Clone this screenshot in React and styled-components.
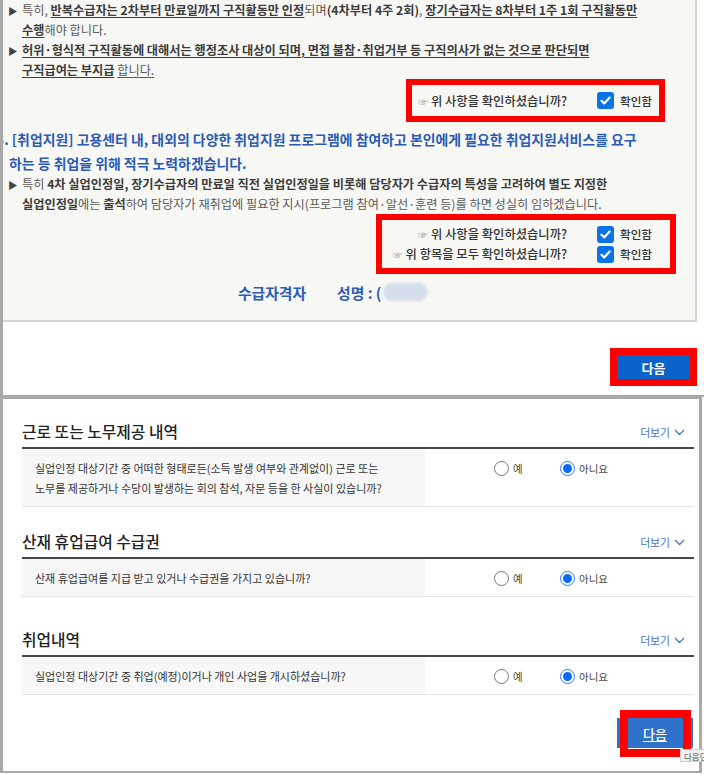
import React from "react";
import styled, { createGlobalStyle } from "styled-components";

const GlobalStyle = createGlobalStyle`
  html, body { margin: 0; padding: 0; background: #fff; }
  body {
    width: 704px;
    height: 774px;
    overflow: hidden;
    font-family: "Noto Sans CJK KR", "Noto Sans", sans-serif;
  }
  * { box-sizing: border-box; }
`;

const Page = styled.div`
  width: 704px;
`;

/* ---------- top panel ---------- */
const TopPanel = styled.section`
  border-left: 3px solid #a9a9a9;
  border-bottom: 2px solid #a9a9a9;
  overflow: hidden;
`;

const Notice = styled.div`
  display: flex;
  flex-direction: column;
  margin-right: 7px;
  padding: 1px 0 16px 5px;
  background: #f7f7f4;
  border-right: 2px solid #d3d3d3;
  border-bottom: 2px solid #d3d3d3;
`;

const Bullet = styled.p`
  margin: 0;
  padding-left: 14px;
  text-indent: -14px;
  font-size: 12.2px;
  line-height: 19.4px;
  color: #5a5a5a;
  white-space: nowrap;
`;

const Arrow = styled.span`
  display: inline-block;
  width: 14px;
  text-indent: 0;
  font-size: 9.5px;
  color: #444;
`;

const Strong = styled.b`
  font-weight: 700;
  color: #3c3c3c;
  text-decoration: ${(p) => (p.$u ? "underline" : "none")};
  text-underline-offset: 2px;
`;

const Under = styled.span`
  text-decoration: underline;
  text-underline-offset: 2px;
`;

const Highlight = styled.div`
  align-self: flex-end;
  display: flex;
  flex-direction: column;
  align-items: flex-end;
  margin-top: ${(p) => p.$mt}px;
  margin-right: ${(p) => p.$mr}px;
  padding: ${(p) => p.$pad};
  border: 6px solid #ff0000;
`;

const ConfirmRow = styled.div`
  display: flex;
  align-items: center;
  height: 20px;
`;

const Question = styled.span`
  font-size: 12.3px;
  font-weight: 500;
  color: #333;
  white-space: nowrap;
`;

const Hand = styled.span`
  font-size: 10px;
  color: #9a9a9a;
  margin-right: 3px;
`;

const CheckLabel = styled.label`
  display: flex;
  align-items: center;
  gap: 6px;
  margin-left: 30px;
  font-size: 11.6px;
  font-weight: 500;
  color: #333;
`;

const CheckBox = styled.span`
  display: inline-flex;
  align-items: center;
  justify-content: center;
  width: 17px;
  height: 17px;
  border-radius: 3px;
  background: #0b72e7;
`;

const Heading = styled.h3`
  margin: 5px 0 0;
  padding-left: 1px;
  text-indent: -13px;
  font-size: 13.9px;
  font-weight: 700;
  line-height: 24px;
  color: #2c5bb4;
  white-space: nowrap;
`;

const Signature = styled.div`
  display: flex;
  align-items: center;
  height: 24px;
  margin-top: 6px;
  padding-left: 230px;
  font-size: 14.8px;
  font-weight: 700;
  color: #2c5bb4;
`;

const NameLabel = styled.span`
  margin-left: 31px;
`;

const Blurred = styled.span`
  display: inline-block;
  width: 45px;
  height: 18px;
  margin-left: 2px;
  border-radius: 9px;
  background: #d7deeb;
  filter: blur(1.6px);
`;

const TopFooter = styled.div`
  display: flex;
  justify-content: flex-end;
  padding: 26px 7px 9px 0;
`;

const RedFrame = styled.div`
  border: 7px solid #ff0000;
`;

const NextButton = styled.button`
  display: block;
  width: 73px;
  height: 24px;
  padding: 0;
  border: 0;
  background: #0a63c9;
  color: #fff;
  font-family: "Noto Sans CJK KR", sans-serif;
  font-size: 13px;
  font-weight: 700;
`;

/* ---------- bottom panel ---------- */
const BottomPanel = styled.section`
  width: 702px;
  border-style: solid;
  border-color: #a9a9a9;
  border-width: 2px 3px 2px 3px;
  padding: 23px 5px 23px 19px;
`;

const Section = styled.div`
  margin-top: ${(p) => p.$gap}px;
`;

const TitleRow = styled.div`
  display: flex;
  align-items: center;
  justify-content: space-between;
  height: 20px;
  margin-bottom: 5px;
  padding-right: 9px;
`;

const Title = styled.h2`
  margin: 0;
  font-size: 15.8px;
  font-weight: 500;
  line-height: 20px;
  color: #222;
`;

const More = styled.span`
  display: flex;
  align-items: center;
  gap: 4px;
  font-size: 10.8px;
  color: #4a73c5;
`;

const Table = styled.div`
  border-top: 2px solid #474747;
`;

const Row = styled.div`
  display: grid;
  grid-template-columns: 403px 1fr;
  border-bottom: 1px solid #e6e6e6;
`;

const Label = styled.div`
  padding: 9px 8px 8px 13px;
  background: #f7f7f7;
  font-size: 11px;
  line-height: 20px;
  color: #333;
  white-space: nowrap;
`;

const Answer = styled.div`
  display: grid;
  grid-template-columns: 66px auto;
  align-content: start;
  padding: 9px 0 0 69px;
`;

const Option = styled.label`
  display: flex;
  align-items: center;
  gap: 4px;
  height: 20px;
  font-size: 10.5px;
  color: #444;
`;

const Radio = styled.span`
  display: inline-flex;
  align-items: center;
  justify-content: center;
  width: 15px;
  height: 15px;
  border-radius: 50%;
  background: #fff;
  border: ${(p) => (p.$on ? "1.5px solid #2f7cf4" : "1px solid #777")};
  &::after {
    content: "";
    display: ${(p) => (p.$on ? "block" : "none")};
    width: 9px;
    height: 9px;
    border-radius: 50%;
    background: #0a6cf5;
  }
`;

const BottomFooter = styled.div`
  display: flex;
  justify-content: flex-end;
  margin-top: 23px;
  padding-right: 1px;
`;

const ButtonWrap = styled.div`
  position: relative;
`;

const SubmitButton = styled.button`
  display: block;
  width: 76px;
  height: 30px;
  padding: 0;
  border: 0;
  background: #2f72cc;
  color: #fff;
  font-family: "Noto Sans CJK KR", sans-serif;
  font-size: 13px;
  font-weight: 500;
  text-decoration: underline;
  text-underline-offset: 2px;
`;

const Annotation = styled.span`
  position: absolute;
  left: 3px;
  right: 2px;
  top: -8px;
  bottom: -9px;
  border: 8px solid #ff0000;
  pointer-events: none;
`;

const Tip = styled.span`
  position: absolute;
  left: 63px;
  top: 31px;
  z-index: 2;
  padding: 0 3px;
  height: 13px;
  line-height: 12px;
  font-size: 8.5px;
  color: #555;
  white-space: nowrap;
  background: #f1f1f1;
  border: 1px solid #cfcfcf;
`;

const Check = () => (
  <CheckBox>
    <svg width="13" height="13" viewBox="0 0 13 13">
      <path d="M2.5 6.8 L5.2 9.4 L10.6 3.6" fill="none" stroke="#fff" strokeWidth="2.2" strokeLinecap="round" strokeLinejoin="round" />
    </svg>
  </CheckBox>
);

const Confirm = ({ text }) => (
  <ConfirmRow>
    <Question>
      <Hand>☞</Hand>
      {text}
    </Question>
    <CheckLabel>
      <Check />
      확인함
    </CheckLabel>
  </ConfirmRow>
);

const Chevron = () => (
  <svg width="11" height="7" viewBox="0 0 11 7">
    <polyline points="1,1 5.5,5.5 10,1" fill="none" stroke="#4a73c5" strokeWidth="1.3" />
  </svg>
);

const sections = [
  {
    title: "근로 또는 노무제공 내역",
    gap: 0,
    lines: [
      "실업인정 대상기간 중 어떠한 형태로든(소득 발생 여부와 관계없이) 근로 또는",
      "노무를 제공하거나 수당이 발생하는 회의 참석, 자문 등을 한 사실이 있습니까?",
    ],
  },
  {
    title: "산재 휴업급여 수급권",
    gap: 25,
    lines: ["산재 휴업급여를 지급 받고 있거나 수급권을 가지고 있습니까?"],
  },
  {
    title: "취업내역",
    gap: 33,
    lines: ["실업인정 대상기간 중 취업(예정)이거나 개인 사업을 개시하셨습니까?"],
  },
];

export default function App() {
  return (
    <Page>
      <GlobalStyle />
      <TopPanel>
        <Notice>
          <Bullet>
            <Arrow>▶</Arrow>특히, <Strong $u>반복수급자는 2차부터 만료일까지 구직활동만 인정</Strong>되며
            <Strong>(4차부터 4주 2회)</Strong>, <Strong $u>장기수급자는 8차부터 1주 1회 구직활동만</Strong>
            <br />
            <Strong $u>수행</Strong>해야 합니다.
          </Bullet>
          <Bullet>
            <Arrow>▶</Arrow>
            <Strong $u>허위·형식적 구직활동에 대해서는 행정조사 대상이 되며, 면접 불참·취업거부 등 구직의사가 없는 것으로 판단되면</Strong>
            <br />
            <Strong $u>구직급여는 부지급</Strong> <Under>합니다.</Under>
          </Bullet>
          <Highlight $mt={-2} $mr={30} $pad="6px 7px 5px 6px">
            <Confirm text="위 사항을 확인하셨습니까?" />
          </Highlight>
          <Heading>
            3. [취업지원] 고용센터 내, 대외의 다양한 취업지원 프로그램에 참여하고 본인에게 필요한 취업지원서비스를 요구
            <br />
            하는 등 취업을 위해 적극 노력하겠습니다.
          </Heading>
          <Bullet>
            <Arrow>▶</Arrow>특히{" "}
            <Strong>4차 실업인정일, 장기수급자의 만료일 직전 실업인정일을 비롯해 담당자가 수급자의 특성을 고려하여 별도 지정한</Strong>
            <br />
            <Strong>실업인정일</Strong>에는 <Strong>출석</Strong>하여 담당자가 재취업에 필요한 지시(프로그램 참여·알선·훈련 등)를 하면 성실히 임하겠습니다.
          </Bullet>
          <Highlight $mt={0} $mr={19} $pad="4px 18px 4px 11px">
            <Confirm text="위 사항을 확인하셨습니까?" />
            <Confirm text="위 항목을 모두 확인하셨습니까?" />
          </Highlight>
          <Signature>
            <span>수급자격자</span>
            <NameLabel>성명 : (</NameLabel>
            <Blurred />
          </Signature>
        </Notice>
        <TopFooter>
          <RedFrame>
            <NextButton type="button">다음</NextButton>
          </RedFrame>
        </TopFooter>
      </TopPanel>

      <BottomPanel>
        {sections.map((s) => (
          <Section key={s.title} $gap={s.gap}>
            <TitleRow>
              <Title>{s.title}</Title>
              <More>
                더보기
                <Chevron />
              </More>
            </TitleRow>
            <Table>
              <Row>
                <Label>
                  {s.lines.map((l, i) => (
                    <div key={i}>{l}</div>
                  ))}
                </Label>
                <Answer>
                  <Option>
                    <Radio />예
                  </Option>
                  <Option>
                    <Radio $on />아니요
                  </Option>
                </Answer>
              </Row>
            </Table>
          </Section>
        ))}
        <BottomFooter>
          <ButtonWrap>
            <SubmitButton type="button">다음</SubmitButton>
            <Annotation />
            <Tip>다음단계</Tip>
          </ButtonWrap>
        </BottomFooter>
      </BottomPanel>
    </Page>
  );
}
